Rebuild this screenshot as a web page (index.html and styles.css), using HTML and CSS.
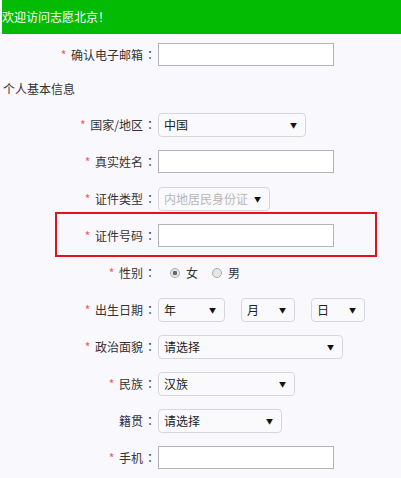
FILE: index.html
```html
<!DOCTYPE html>
<html lang="zh-CN">
<head>
  <meta charset="UTF-8">
  <meta name="viewport" content="width=device-width, initial-scale=1.0">
  <title>志愿北京 - 注册</title>
  <link rel="stylesheet" href="styles.css">
</head>
<body>
  <div class="top-bar">欢迎访问志愿北京！</div>

  <form class="reg-form">
    <div class="row row-first">
      <label class="lbl"><span class="star">*</span> 确认电子邮箱<span class="colon">：</span></label>
      <input type="text" class="txt">
    </div>

    <div class="section-title">个人基本信息</div>

    <div class="row">
      <label class="lbl"><span class="star">*</span> 国家/地区<span class="colon">：</span></label>
      <span class="sel w-country"><select><option>中国</option></select></span>
    </div>
    <div class="row">
      <label class="lbl"><span class="star">*</span> 真实姓名<span class="colon">：</span></label>
      <input type="text" class="txt">
    </div>
    <div class="row">
      <label class="lbl"><span class="star">*</span> 证件类型<span class="colon">：</span></label>
      <span class="sel w-idtype disabled"><select disabled><option>内地居民身份证</option></select></span>
    </div>
    <div class="row highlight">
      <label class="lbl"><span class="star">*</span> 证件号码<span class="colon">：</span></label>
      <input type="text" class="txt">
    </div>
    <div class="row">
      <label class="lbl"><span class="star">*</span> 性别<span class="colon">：</span></label>
      <div class="radios">
        <label class="radio"><span class="dot checked"></span>女</label>
        <label class="radio"><span class="dot"></span>男</label>
      </div>
    </div>
    <div class="row">
      <label class="lbl"><span class="star">*</span> 出生日期<span class="colon">：</span></label>
      <div class="date-group">
        <span class="sel w-year"><select><option>年</option></select></span>
        <span class="sel w-month"><select><option>月</option></select></span>
        <span class="sel w-month"><select><option>日</option></select></span>
      </div>
    </div>
    <div class="row">
      <label class="lbl"><span class="star">*</span> 政治面貌<span class="colon">：</span></label>
      <span class="sel w-politics"><select><option>请选择</option></select></span>
    </div>
    <div class="row">
      <label class="lbl"><span class="star">*</span> 民族<span class="colon">：</span></label>
      <span class="sel w-nation"><select><option>汉族</option></select></span>
    </div>
    <div class="row">
      <label class="lbl">籍贯<span class="colon">：</span></label>
      <span class="sel w-native"><select><option>请选择</option></select></span>
    </div>
    <div class="row">
      <label class="lbl"><span class="star">*</span> 手机<span class="colon">：</span></label>
      <input type="text" class="txt">
    </div>
  </form>
</body>
</html>
```

FILE: styles.css
```css
body {
  margin: 0;
  background: #f9f8fd;
  font-family: "Noto Sans CJK SC", "Microsoft YaHei", sans-serif;
  font-size: 12px;
  color: #333;
}
.top-bar {
  height: 34px;
  line-height: 34px;
  margin-left: 2px;
  background: #03bb03;
  color: #fff;
  font-size: 12px;
}
.reg-form {
  margin: 0;
}
.row {
  position: relative;
  display: flex;
  align-items: center;
  height: 37px;
}
.row-first {
  margin-top: 2px;
}
.lbl {
  width: 157px;
  flex-shrink: 0;
  text-align: right;
  white-space: nowrap;
}
.colon {
  display: inline-block;
  width: 14px;
  text-align: center;
  font-family: "Noto Sans CJK TC", sans-serif;
}
.star {
  color: #f05a5a;
  margin-right: 2px;
}
.section-title {
  height: 33px;
  line-height: 31px;
  padding-left: 3px;
}
.txt {
  box-sizing: border-box;
  width: 176px;
  height: 23px;
  margin: 0 0 0 1px;
  padding: 0 4px;
  border: 1px solid #b4b4b4;
  background: #fff;
  font: inherit;
}
.sel {
  position: relative;
  display: inline-block;
  box-sizing: border-box;
  height: 24px;
  margin-left: 1px;
  border: 1px solid #d6d6dc;
  border-radius: 4px;
  background: #fafafd;
}
.sel select {
  -webkit-appearance: none;
  appearance: none;
  width: 100%;
  height: 100%;
  border: none;
  background: transparent;
  padding: 0 0 0 5px;
  font: inherit;
  color: #222;
  outline: none;
}
.sel::after {
  content: "▼";
  position: absolute;
  right: 8px;
  top: 6px;
  font-size: 7px;
  line-height: 10px;
  color: #111;
  pointer-events: none;
}
.sel.disabled select {
  color: #999;
}
.w-country { width: 148px; }
.w-idtype { width: 112px; }
.w-year { width: 67px; }
.w-month { width: 54px; }
.w-politics { width: 185px; }
.w-nation { width: 137px; }
.w-native { width: 124px; }
.date-group {
  display: flex;
  gap: 16px;
}
.date-group .sel {
  margin-left: 0;
}
.date-group .sel:first-child {
  margin-left: 1px;
}
.radios {
  display: flex;
  align-items: center;
  gap: 14px;
  margin-left: 13px;
}
.radio {
  display: flex;
  align-items: center;
  gap: 6px;
}
.dot {
  box-sizing: border-box;
  width: 10px;
  height: 10px;
  border: 1px solid #aaa;
  border-radius: 50%;
  background: #e6e6e6;
}
.dot.checked {
  background: radial-gradient(circle, #666 0 2px, #e6e6e6 2.5px);
}
.highlight::after {
  content: "";
  position: absolute;
  left: 55px;
  right: 24px;
  top: -5px;
  bottom: -3px;
  border: 2px solid #e0141e;
  pointer-events: none;
}
```
